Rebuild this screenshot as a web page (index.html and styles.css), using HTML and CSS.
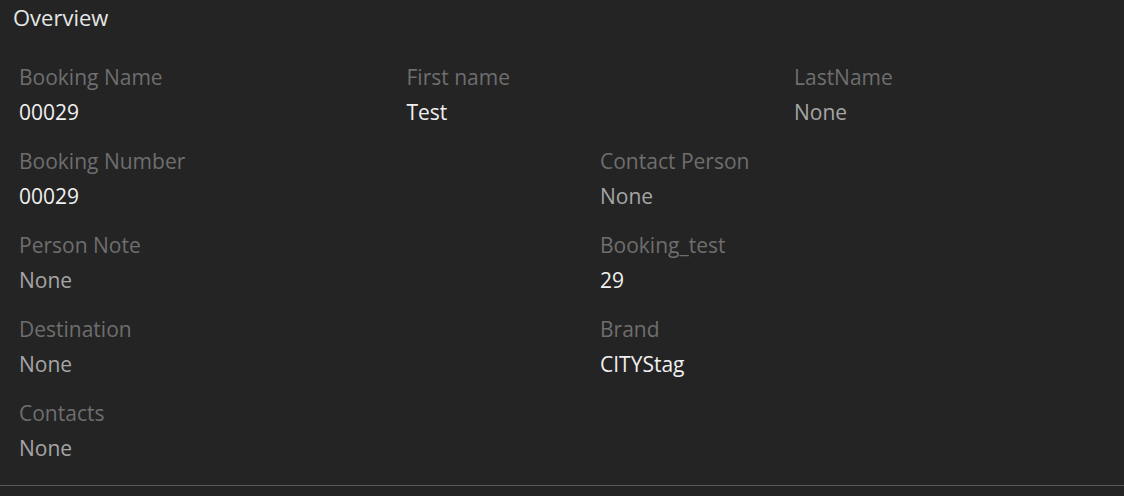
FILE: index.html
```html
<!DOCTYPE html>
<html>
<head>
  <meta charset="UTF-8">
  <title>Overview</title>
  <link rel="stylesheet" href="styles.css">
</head>
<body>
  <div class="panel">
    <div class="panel-title">Overview</div>
    <div class="fields three">
      <div class="field"><div class="label">Booking Name</div><div class="value">00029</div></div>
      <div class="field"><div class="label">First name</div><div class="value">Test</div></div>
      <div class="field"><div class="label">LastName</div><div class="value empty">None</div></div>
    </div>
    <div class="fields two">
      <div class="field"><div class="label">Booking Number</div><div class="value">00029</div></div>
      <div class="field"><div class="label">Contact Person</div><div class="value empty">None</div></div>
      <div class="field"><div class="label">Person Note</div><div class="value empty">None</div></div>
      <div class="field"><div class="label">Booking_test</div><div class="value">29</div></div>
      <div class="field"><div class="label">Destination</div><div class="value empty">None</div></div>
      <div class="field"><div class="label">Brand</div><div class="value">CITYStag</div></div>
      <div class="field"><div class="label">Contacts</div><div class="value empty">None</div></div>
    </div>
  </div>
</body>
</html>
```
FILE: styles.css
```css
body {
  margin: 0;
  background-color: #242424;
  font-family: "Open Sans", sans-serif;
}
.panel {
  border-bottom: 1px solid #5a5a5a;
  padding-bottom: 5px;
}
.panel-title {
  color: #e6e6e6;
  font-size: 22px;
  line-height: 34px;
  padding-left: 13px;
  margin-bottom: 26px;
}
.fields {
  display: grid;
  padding-left: 19px;
}
.three {
  grid-template-columns: 387.5px 387.5px 1fr;
}
.two {
  grid-template-columns: 581px 1fr;
}
.field {
  margin-bottom: 14px;
}
.label {
  color: #6e6e6e;
  font-size: 21px;
  line-height: 35px;
}
.value {
  color: #f0f0f0;
  font-size: 21px;
  line-height: 35px;
}
.value.empty {
  color: #a6a6a6;
}
```
